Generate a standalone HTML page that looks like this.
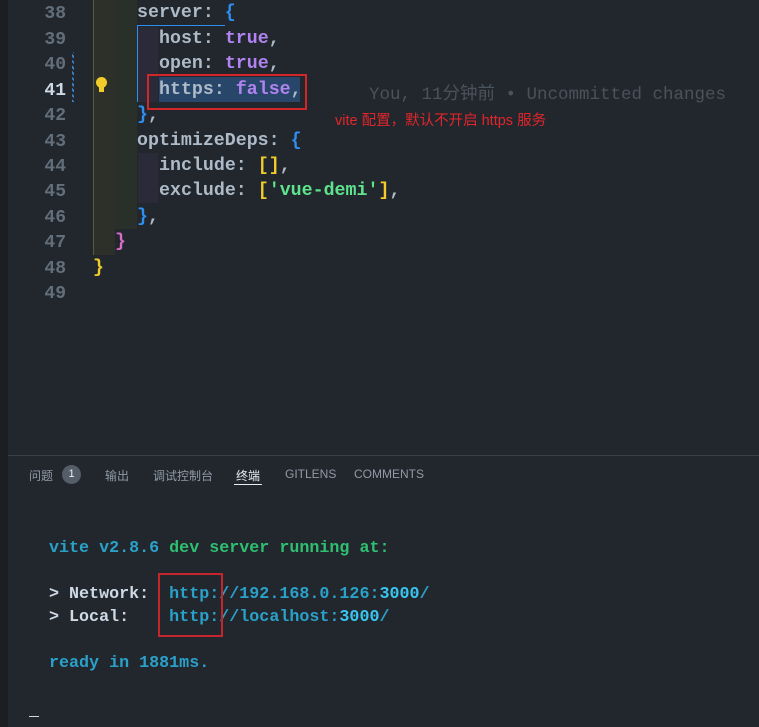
<!DOCTYPE html>
<html><head><meta charset="utf-8"><style>
body{margin:0;width:759px;height:727px;background:#22272e;overflow:hidden;position:relative;font-family:"Liberation Mono","Noto Sans CJK SC",monospace;}
.ab{position:absolute}
.ln{position:absolute;left:20px;width:46px;text-align:right;color:#636e7b;font-size:18px;font-weight:bold}
.code{position:absolute;font-size:18.3px;white-space:pre;color:#adbac7;font-weight:bold}
.k{color:#adbac7}.t{color:#b083f0}.b{color:#2f8ff0}.y{color:#f2cc2a}.s{color:#5ee38c}.p{color:#d96cc6}
.term{position:absolute;left:49px;font-size:16.7px;white-space:pre;font-weight:bold}
.tab{position:absolute;top:467px;font-family:"Liberation Sans","Noto Sans CJK SC",sans-serif;font-size:12px;color:#909aa5}
</style></head><body>
<div class="ab" style="left:0;top:0;width:8px;height:727px;background:#1b1f24"></div>
<div class="ab" style="left:93px;top:0;width:22px;height:255px;background:#2d3029"></div>
<div class="ab" style="left:115px;top:0;width:22px;height:229px;background:#293029"></div>
<div class="ab" style="left:93px;top:0;width:1px;height:255px;background:#5a5a3a"></div>
<div class="ab" style="left:137px;top:25px;width:88px;height:1px;background:#2f8ff0"></div>
<div class="ab" style="left:137px;top:25px;width:1px;height:77px;background:#2f8ff0"></div>
<div class="ab" style="left:138px;top:27px;width:20px;height:75px;background:#2a2a38"></div>
<div class="ab" style="left:138px;top:153px;width:20px;height:50px;background:#2a2a38"></div>
<div class="ab" style="left:72px;top:52px;width:2px;height:50px;background:repeating-linear-gradient(45deg,#3b82c4 0 2px,transparent 2px 4px)"></div>
<div class="ab" style="left:159px;top:77px;width:141px;height:25px;background:#28456a"></div>
<div class="ab" style="left:147px;top:74px;width:160px;height:36px;border:2px solid #d3262b;box-sizing:border-box"></div>
<div class="ab" style="left:96px;top:77px;width:11px;height:11px;border-radius:50%;background:#f2cc2a"></div>
<div class="ab" style="left:99px;top:87px;width:5px;height:5px;background:#f2cc2a"></div>

<div class="ln" style="top:4px">38</div>
<div class="ln" style="top:30px">39</div>
<div class="ln" style="top:55px">40</div>
<div class="ln" style="top:81px;color:#cdd9e5">41</div>
<div class="ln" style="top:106px">42</div>
<div class="ln" style="top:132px">43</div>
<div class="ln" style="top:157px">44</div>
<div class="ln" style="top:182px">45</div>
<div class="ln" style="top:208px">46</div>
<div class="ln" style="top:233px">47</div>
<div class="ln" style="top:259px">48</div>
<div class="ln" style="top:284px">49</div>

<div class="code" style="left:137px;top:3px">server: <span class="b">{</span></div>
<div class="code" style="left:159px;top:29px">host: <span class="t">true</span>,</div>
<div class="code" style="left:159px;top:54px">open: <span class="t">true</span>,</div>
<div class="code" style="left:159px;top:80px">https: <span class="t">false</span>,</div>
<div class="code" style="left:137px;top:105px"><span class="b">}</span>,</div>
<div class="code" style="left:137px;top:131px">optimizeDeps: <span class="b">{</span></div>
<div class="code" style="left:159px;top:156px">include: <span class="y">[]</span>,</div>
<div class="code" style="left:159px;top:181px">exclude: <span class="y">[</span><span class="s">'vue-demi'</span><span class="y">]</span>,</div>
<div class="code" style="left:137px;top:207px"><span class="b">}</span>,</div>
<div class="code" style="left:115px;top:232px"><span class="p">}</span></div>
<div class="code" style="left:93px;top:258px"><span class="y">}</span></div>

<div class="code" style="left:369px;top:80px;color:#4a525c;font-weight:normal;font-size:17.5px">You, 11分钟前 • Uncommitted changes</div>
<div class="ab" style="left:335px;top:109px;color:#e0262b;font-family:'Liberation Sans','Noto Sans CJK SC',sans-serif;font-size:14.5px">vite 配置，默认不开启 https 服务</div>

<div class="ab" style="left:8px;top:455px;width:751px;height:1px;background:#3a4048"></div>
<div class="tab" style="left:29px">问题</div>
<div class="ab" style="left:62px;top:465px;width:19px;height:19px;border-radius:50%;background:#545d68;color:#e6edf3;font-family:'Liberation Sans',sans-serif;font-size:11px;text-align:center;line-height:19px">1</div>
<div class="tab" style="left:105px">输出</div>
<div class="tab" style="left:153px">调试控制台</div>
<div class="tab" style="left:236px;color:#e6edf3">终端</div>
<div class="ab" style="left:234px;top:484px;width:28px;height:1px;background:#e6edf3"></div>
<div class="tab" style="left:285px">GITLENS</div>
<div class="tab" style="left:354px">COMMENTS</div>

<div class="term" style="top:539px"><span style="color:#2aa1c9">vite v2.8.6</span> <span style="color:#2fbf71">dev server running at:</span></div>
<div class="term" style="top:585px;color:#cdd9e5">&gt; Network:  <span style="color:#2aa1c9">http://192.168.0.126:<b style="color:#39c5f0">3000</b>/</span></div>
<div class="term" style="top:608px;color:#cdd9e5">&gt; Local:    <span style="color:#2aa1c9">http://localhost:<b style="color:#39c5f0">3000</b>/</span></div>
<div class="ab" style="left:158px;top:573px;width:65px;height:64px;border:2px solid #c4262b;box-sizing:border-box"></div>
<div class="term" style="top:654px;color:#2aa1c9">ready in 1881ms.</div>
<div class="ab" style="left:29px;top:716px;width:10px;height:1px;background:#cdd9e5"></div>
</body></html>
